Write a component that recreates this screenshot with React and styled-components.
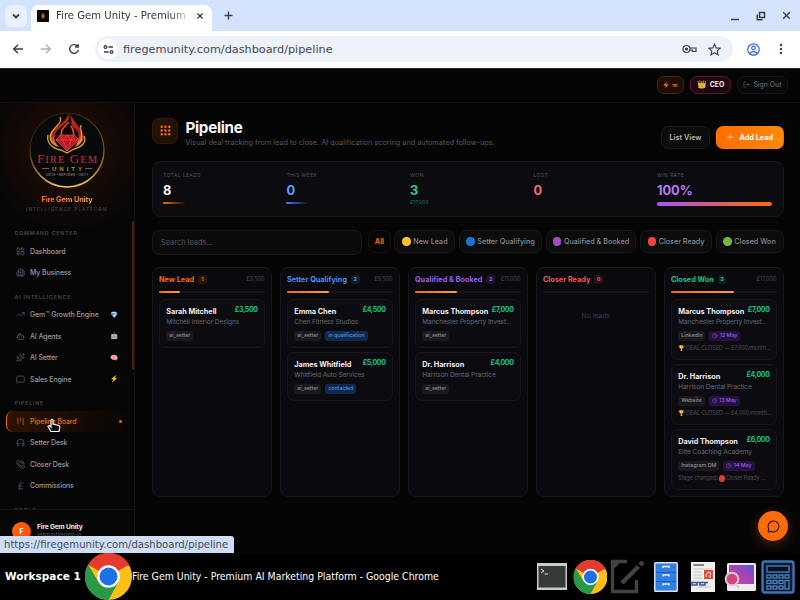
import React from "react";
import styled, { createGlobalStyle, css } from "styled-components";
import {
  LayoutDashboard,
  Building2,
  TrendingUp,
  Bot,
  Sparkles,
  MessageSquare,
  Kanban,
  Headphones,
  PhoneCall,
  PoundSterling,
  LogOut,
  Zap,
  Grip,
  Plus,
  Clock,
  MessageCircle
} from "lucide-react";

const GlobalStyle = createGlobalStyle`
  * { box-sizing: border-box; }
  body {
    margin: 0;
    background: #000;
    overflow: hidden;
  }
`;

const Screen = styled.div`
  width: 800px;
  height: 600px;
  position: relative;
  display: flex;
  flex-direction: column;
  overflow: hidden;
  white-space: nowrap;
  font-family: Inter, "Liberation Sans", sans-serif;
`;

/* ---------- browser ---------- */

const TabStrip = styled.div`
  height: 31px;
  flex: none;
  background: #d3e3fd;
  display: flex;
  align-items: flex-end;
  font-family: "DejaVu Sans", sans-serif;
`;

const TabSearch = styled.div`
  width: 22px;
  height: 22px;
  margin: 0 4px 4px 5px;
  border-radius: 7px;
  background: #e9f1fe;
  display: flex;
  align-items: center;
  justify-content: center;
`;

const Tab = styled.div`
  width: 181px;
  height: 26px;
  padding: 0 8px 5px 6px;
  border-radius: 8px 8px 0 0;
  background: #fff;
  display: flex;
  align-items: center;
`;

const Favicon = styled.div`
  width: 12px;
  height: 12px;
  flex: none;
  margin-right: 7px;
  background: radial-gradient(ellipse 2.5px 4px, #e9a516, #4b2703 70%, #070707 100%);
`;

const TabTitle = styled.div`
  width: 134px;
  flex: none;
  margin-right: 6px;
  font-size: 10.1px;
  color: #30343a;
  mask-image: linear-gradient(90deg, #000 85%, rgba(0, 0, 0, 0.2) 98%);
`;

const NewTab = styled.div`
  height: 31px;
  margin-left: 12px;
  flex: 1;
  display: flex;
  align-items: center;
`;

const WindowButtons = styled.div`
  height: 31px;
  padding-right: 9px;
  display: flex;
  align-items: center;
  gap: 16px;
`;

const Toolbar = styled.div`
  height: 37px;
  flex: none;
  background: #fff;
  display: flex;
  align-items: center;
  padding: 0 11px 1px 11px;
`;

const NavButtons = styled.div`
  width: 84px;
  display: flex;
  gap: 14px;
`;

const AddressBar = styled.div`
  width: 638px;
  height: 26px;
  border-radius: 13px;
  background: #edf1fa;
  display: flex;
  align-items: center;
  padding: 0 12px 0 3px;
  font-family: "DejaVu Sans", sans-serif;
  color: #43474e;
`;

const SiteInfo = styled.div`
  width: 20px;
  height: 20px;
  margin-right: 5px;
  border-radius: 50%;
  background: #fff;
  display: flex;
  align-items: center;
  justify-content: center;
`;

const Url = styled.div`
  flex: 1;
  font-size: 11.25px;
`;

const BarActions = styled.div`
  display: flex;
  align-items: center;
  gap: 11px;
`;

const ToolActions = styled.div`
  margin-left: 14px;
  display: flex;
  align-items: center;
  gap: 19px;
`;

/* ---------- page ---------- */

const Page = styled.div`
  height: 485px;
  flex: none;
  background: #050505;
  border-top: 1px solid #2a2a2c;
  display: flex;
  flex-direction: column;
  overflow: hidden;
`;

const TopBar = styled.div`
  height: 34px;
  flex: none;
  border-bottom: 1px solid #101012;
  background: #050506;
  display: flex;
  align-items: center;
  justify-content: flex-end;
  gap: 6px;
  padding: 0 12px 2px 0;
`;

const TopPill = styled.div`
  width: ${props => props.width};
  height: 18px;
  border: 1px solid ${props => props.line};
  border-radius: 7px;
  background: ${props => props.fill};
  color: ${props => props.tone};
  font-size: 6.9px;
  font-weight: ${props => props.weight || 600};
  display: flex;
  align-items: center;
  justify-content: center;
  gap: 3px;
`;

const Crown = styled.span`
  font-size: 7.8px;
  line-height: 9px;
`;

const Infinity = styled.span`
  font-size: 5.5px;
`;

const Body = styled.div`
  flex: 1;
  min-height: 0;
  display: flex;
`;

const Sidebar = styled.div`
  width: 135px;
  flex: none;
  border-right: 1px solid #121214;
  display: flex;
  flex-direction: column;
  background: radial-gradient(circle 85px at 68px 46px, #2a1205 0, #160a05 50%, #060607 100%);
`;

const Brand = styled.div`
  height: 112px;
  flex: none;
  padding-top: 8px;
  display: flex;
  flex-direction: column;
  align-items: center;
`;

const BrandName = styled.div`
  margin-top: 5px;
  line-height: 11px;
  font-size: 7.3px;
  font-weight: 700;
  letter-spacing: -0.1px;
  color: transparent;
  background: linear-gradient(90deg, #ff6c00, #ffb13b);
  background-clip: text;
`;

const BrandTag = styled.div`
  line-height: 9px;
  font-size: 4.7px;
  letter-spacing: 1.05px;
  color: #4c4c52;
`;

const ScrollArea = styled.div`
  height: 294px;
  flex: none;
  overflow: hidden;
  display: flex;
`;

const Nav = styled.div`
  flex: 1;
  padding: 13px 0 0 6px;
`;

const ScrollThumb = styled.div`
  width: 2px;
  height: 149px;
  margin-top: 6px;
  border-radius: 2px;
  background: #4c1f07;
`;

const NavLabel = styled.div`
  height: 10px;
  margin-top: ${props => (props.first ? "0" : "8.2px")};
  margin-bottom: 2.4px;
  padding-left: 8.5px;
  line-height: 10px;
  font-size: 5.25px;
  font-weight: 600;
  letter-spacing: 0.83px;
  color: #46464c;
`;

const NavItem = styled.div`
  width: 122px;
  height: 21.5px;
  padding: 0 5px 0 8.5px;
  display: flex;
  align-items: center;
  gap: 5.5px;
  border-left: 1px solid transparent;
  border-radius: 7px;
  color: #98989e;
  font-size: 7px;
  font-weight: 500;
  letter-spacing: -0.12px;
  svg { color: #5a5a60; }
  ${props =>
    props.active &&
    css`
      color: #f96a09;
      border-left-color: #ff6a00;
      background: linear-gradient(90deg, #2c1303, #120804 70%, #080605);
      svg { color: #d8590a; }
    `}
`;

const NavText = styled.div`
  flex: 1;
`;

const NavEmoji = styled.div`
  width: 10px;
  margin-right: 4px;
  font-size: 6.6px;
  line-height: 8px;
  text-align: center;
`;

const ActiveDot = styled.div`
  width: 3px;
  height: 3px;
  margin-right: 1px;
  border-radius: 50%;
  background: #ff6a00;
`;

const UserBox = styled.div`
  flex: 1;
  border-top: 1px solid #161618;
  padding: 12px 0 0 12px;
  display: flex;
  align-items: flex-start;
  gap: 6px;
`;

const Avatar = styled.div`
  width: 19px;
  height: 19px;
  border-radius: 50%;
  background: linear-gradient(135deg, #ff6a00, #ff4512);
  color: #fff;
  font-size: 7px;
  font-weight: 700;
  display: flex;
  align-items: center;
  justify-content: center;
`;

const UserName = styled.div`
  line-height: 10px;
  font-size: 6.7px;
  font-weight: 700;
  letter-spacing: -0.18px;
  color: #e9e9ec;
`;

const UserMail = styled.div`
  line-height: 7px;
  font-size: 5.5px;
  color: #505056;
`;

const Main = styled.div`
  flex: 1;
  min-width: 0;
  padding: 14px 16.5px 0 17px;
`;

const Header = styled.div`
  height: 44px;
  display: flex;
  align-items: flex-start;
`;

const HeaderIcon = styled.div`
  width: 26px;
  height: 26px;
  margin: 0.5px 7.5px 0 0;
  border-radius: 7px;
  border: 1px solid #301a0a;
  background: linear-gradient(135deg, #281305, #1b1005);
  color: #ff6a00;
  display: flex;
  align-items: center;
  justify-content: center;
`;

const Heading = styled.div`
  flex: 1;
  padding-top: 1px;
`;

const Title = styled.div`
  line-height: 20px;
  font-size: 15.2px;
  font-weight: 700;
  letter-spacing: -0.3px;
  color: #fafafa;
`;

const Subtitle = styled.div`
  line-height: 10px;
  font-size: 7.3px;
  color: #56565d;
`;

const Button = styled.div`
  width: ${props => (props.primary ? "67.5px" : "49px")};
  height: 22.5px;
  margin: 9px 0 0 6px;
  border-radius: 7px;
  display: flex;
  align-items: center;
  justify-content: center;
  gap: 5px;
  font-size: 7.3px;
  font-weight: ${props => (props.primary ? 700 : 600)};
  color: ${props => (props.primary ? "#fff" : "#b4b4b8")};
  background: ${props =>
    props.primary ? "linear-gradient(90deg, #ff6b00, #ff8a0a)" : "#0c0c0d"};
  border: 1px solid ${props => (props.primary ? "transparent" : "#19191b")};
`;

const StatsPanel = styled.div`
  height: 56px;
  padding: 9px 10.5px 0 10px;
  border: 1px solid #18181c;
  border-radius: 9px;
  background: #0b0b10;
  display: grid;
  grid-template-columns: repeat(5, 1fr);
  column-gap: 8.4px;
`;

const Stat = styled.div`
  display: flex;
  flex-direction: column;
`;

const StatLabel = styled.div`
  line-height: 9px;
  font-size: 5.2px;
  letter-spacing: 0.3px;
  color: #505057;
`;

const StatValue = styled.div`
  margin-top: 3px;
  line-height: 15px;
  font-size: 12.8px;
  font-weight: 700;
  color: ${props => props.tone};
`;

const StatLine = styled.div`
  width: ${props => props.width};
  height: ${props => props.height};
  margin-top: 3.5px;
  border-radius: 2px;
  background: linear-gradient(90deg, ${props => props.from}, ${props => props.to});
`;

const StatNote = styled.div`
  line-height: 8px;
  margin-top: 0;
  font-size: 5.1px;
  color: #0e7f5a;
`;

const Filters = styled.div`
  height: 50px;
  padding-top: 13px;
  display: flex;
  align-items: flex-start;
  gap: 3.6px;
`;

const Search = styled.div`
  width: 210.5px;
  height: 25px;
  margin: -0.5px 2px 0 0;
  padding-left: 8px;
  border: 1px solid #17171a;
  border-radius: 7px;
  background: #0b0b0e;
  line-height: 23px;
  font-size: 7.4px;
  color: #56565d;
`;

const Chip = styled.div`
  width: ${props => props.width};
  height: 22.5px;
  border-radius: 7px;
  border: 1px solid ${props => (props.active ? "#1c0e06" : "#161617")};
  background: ${props => (props.active ? "#080605" : "#0c0c0d")};
  color: ${props => (props.active ? "#f56504" : "#8a8a8f")};
  font-size: 7.2px;
  font-weight: ${props => (props.active ? 700 : 500)};
  display: flex;
  align-items: center;
  justify-content: center;
  gap: 2.5px;
`;

const Dot = styled.span`
  display: inline-block;
  flex: none;
  width: ${props => props.size || "8.5px"};
  height: ${props => props.size || "8.5px"};
  border-radius: 50%;
  background: ${props => props.tone};
`;

const Board = styled.div`
  display: grid;
  grid-template-columns: repeat(5, 1fr);
  column-gap: 8.4px;
`;

const Column = styled.div`
  min-width: 0;
  height: 230px;
  padding: 5.5px 6px 0 6px;
  border: 1px solid #17171b;
  border-radius: 8px;
  background: #0a0a0e;
`;

const ColumnHead = styled.div`
  height: 12px;
  display: flex;
  align-items: center;
`;

const ColumnTitle = styled.div`
  font-size: 7.3px;
  font-weight: 700;
  color: ${props => props.tone};
`;

const Count = styled.div`
  width: 8.5px;
  height: 9px;
  margin: -1px 0 0 4px;
  border-radius: 3px;
  background: ${props => props.tone}22;
  color: ${props => props.tone};
  font-size: 5.4px;
  font-weight: 700;
  line-height: 9px;
  text-align: center;
`;

const Total = styled.div`
  margin: -2px 0 0 auto;
  font-size: 5.5px;
  line-height: 10px;
  color: #4a4a51;
`;

const Track = styled.div`
  height: 2.6px;
  margin: 5px 0 6px;
  border-radius: 2px;
  background: #15151a;
`;

const TrackFill = styled.div`
  width: ${props => props.amount}%;
  height: 100%;
  border-radius: 2px;
  background: linear-gradient(90deg, #ff6a00, #ffa028);
`;

const Card = styled.div`
  height: ${props => (props.tall ? "60.6px" : "48.7px")};
  margin-bottom: 4.4px;
  padding: 5px 6px 0 6.3px;
  border: 1px solid #17171c;
  border-radius: 7px;
  background: #0c0c10;
`;

const CardTop = styled.div`
  display: flex;
  justify-content: space-between;
`;

const CardName = styled.div`
  line-height: 13px;
  font-size: 7.3px;
  font-weight: 700;
  letter-spacing: -0.05px;
  color: #ededf0;
`;

const Amount = styled.div`
  line-height: 10px;
  font-size: 7px;
  font-weight: 700;
  letter-spacing: -0.38px;
  color: #15c58a;
`;

const Company = styled.div`
  line-height: 9px;
  font-size: 6.6px;
  letter-spacing: -0.1px;
  color: #666871;
`;

const Tags = styled.div`
  margin-top: 4px;
  display: flex;
  gap: 4px;
`;

const tagTones = {
  grey: ["#1a1a1e", "#8b8b91"],
  blue: ["#10294d", "#4c8fe4"],
  purple: ["#261240", "#9c5fe0"]
};

const Tag = styled.div`
  height: 9.5px;
  padding: 0 3px;
  border-radius: 3px;
  background: ${props => tagTones[props.kind][0]};
  color: ${props => tagTones[props.kind][1]};
  font-size: 5.4px;
  font-weight: 500;
  letter-spacing: -0.08px;
  line-height: 9px;
  display: flex;
  align-items: center;
  gap: 2px;
`;

const Note = styled.div`
  margin-top: 3.5px;
  line-height: 9px;
  font-size: 5.5px;
  letter-spacing: -0.1px;
  color: #4a4a51;
  display: flex;
  align-items: center;
  gap: 1px;
`;

const Empty = styled.div`
  margin-top: 18px;
  text-align: center;
  font-size: 6.8px;
  line-height: 10px;
  color: #3c3c42;
`;

/* ---------- overlays and taskbar ---------- */

const ChatButton = styled.div`
  position: absolute;
  left: 758px;
  top: 511px;
  width: 30px;
  height: 30px;
  border-radius: 50%;
  background: #ff6b08;
  box-shadow: 0 3px 12px rgba(255, 107, 0, 0.3);
  color: #251103;
  display: flex;
  align-items: center;
  justify-content: center;
`;

const StatusBubble = styled.div`
  position: absolute;
  left: 0;
  top: 536px;
  width: 234px;
  height: 17px;
  padding-left: 4px;
  border-radius: 0 3px 0 0;
  background: #cfdef8;
  color: #454a53;
  font: 10.1px/17px "DejaVu Sans", sans-serif;
`;

const Pointer = styled.svg`
  position: absolute;
  left: 47px;
  top: 418px;
`;

const Taskbar = styled.div`
  height: 47px;
  flex: none;
  position: relative;
  background: #000;
  color: #fff;
  display: flex;
  align-items: center;
  padding: 0 5px;
`;

const Workspace = styled.div`
  width: 80px;
  margin-top: -1px;
  font: bold 10.5px "DejaVu Sans", sans-serif;
`;

const TaskTitle = styled.div`
  flex: 1;
  margin-top: -1px;
  font: 10.43px "DejaVu Sans Condensed", "DejaVu Sans", sans-serif;
`;

const Dock = styled.div`
  display: flex;
  align-items: center;
  gap: 2.5px;
`;

const stroke = { fill: "none", stroke: "#3b3e44", strokeWidth: 1.4 };

const ChromeLogo = ({ size }) => (
  <svg width={size} height={size} viewBox="0 0 48 48">
    <circle cx="24" cy="24" r="24" fill="#fbc116" />
    <path d="M24 24 L3.2 12 A24 24 0 0 1 44.8 12 Z" fill="#e33b2e" />
    <path d="M24 13 H45.3 L44.8 12 A24 24 0 0 0 24 0 Z" fill="#e33b2e" />
    <path d="M3.2 12 A24 24 0 0 0 24 48 L34 29.8 L14 29.8 Z" fill="#299847" />
    <circle cx="24" cy="24" r="11.5" fill="#fff" />
    <circle cx="24" cy="24" r="9.2" fill="#1b72e8" />
  </svg>
);

const BrandLogo = () => (
  <svg width="78" height="78" viewBox="0 0 78 78">
    <defs>
      <linearGradient id="ring" x1="0" y1="0" x2="1" y2="1">
        <stop offset="0" stopColor="#20160c" />
        <stop offset="0.5" stopColor="#4e3512" />
        <stop offset="1" stopColor="#a87520" />
      </linearGradient>
      <linearGradient id="ringLow" x1="0" y1="0" x2="0" y2="1">
        <stop offset="0.45" stopColor="#a57018" stopOpacity="0" />
        <stop offset="1" stopColor="#f2c35a" />
      </linearGradient>
      <linearGradient id="flame" x1="0" y1="0" x2="0" y2="1">
        <stop offset="0" stopColor="#d9311e" />
        <stop offset="0.6" stopColor="#a5161a" />
        <stop offset="1" stopColor="#e9a83a" />
      </linearGradient>
    </defs>
    <circle cx="39" cy="39" r="37" fill="#08090b" stroke="url(#ring)" strokeWidth="1.2" />
    <circle cx="39" cy="39" r="37" fill="none" stroke="url(#ringLow)" strokeWidth="1.6" />
    <path d="M40 3 C43 10 37 12 31 18 C25 23 25 31 31 36 C22 34 20 27 24 20 C28 14 39 12 40 3Z" fill="url(#flame)" />
    <path d="M41 2 C45 9 42 12 45 16 C51 20 53 27 47 36 C57 32 58 24 52 17 C48 13 46 9 41 2Z" fill="url(#flame)" />
    <path d="M32 6 C34 10 31 13 27 17 C23 21 20 26 24 32 M53 14 C51 19 57 24 51 33 M20 24 C18 32 25 38 33 39 L39 42 L46 38 C54 36 59 31 56 25" fill="none" stroke="#dca33c" strokeWidth="1.3" />
    <path d="M41 11 C34 18 32 20 34 25 M43 15 C46 19 45 21 46 24" fill="none" stroke="#eb4a24" strokeWidth="1.6" />
    <path d="M32 24 H46 L51 29 L39 40 L28 29Z" fill="#bd1821" stroke="#ef5a50" strokeWidth="0.6" />
    <path d="M28 29 H51 M32 24 L35 29 L39 40 L43 29 L46 24 M35 29 L39 24 L43 29" fill="none" stroke="#f0605c" strokeWidth="0.5" />
    <text x="39" y="51.5" textAnchor="middle" textLength="60" fontFamily="Liberation Serif, serif" fontSize="13" fill="#d02a2c">
      F<tspan fontSize="10.5">IRE</tspan> G<tspan fontSize="10.5">EM</tspan>
    </text>
    <text x="39" y="59.5" textAnchor="middle" textLength="30" fontFamily="Liberation Sans, sans-serif" fontSize="6" fontWeight="700" fill="#b98632">
      UNITY
    </text>
    <path d="M14 57.5 H21 M57 57.5 H64" stroke="#a87427" strokeWidth="0.8" />
    <text x="39" y="64.5" textAnchor="middle" textLength="42" fontFamily="Liberation Sans, sans-serif" fontSize="2.7" fill="#a4a4a8">
      UNITE • EMPOWER • UNITY
    </text>
  </svg>
);

const navGroups = [
  {
    label: "COMMAND CENTER",
    items: [
      { text: "Dashboard", Icon: LayoutDashboard },
      { text: "My Business", Icon: Building2 }
    ]
  },
  {
    label: "AI INTELLIGENCE",
    items: [
      { text: "Gem™ Growth Engine", Icon: TrendingUp, emoji: "💎" },
      { text: "AI Agents", Icon: Bot, emoji: "🤖" },
      { text: "AI Setter", Icon: Sparkles, emoji: "🧠" },
      { text: "Sales Engine", Icon: MessageSquare, emoji: "⚡" }
    ]
  },
  {
    label: "PIPELINE",
    items: [
      { text: "Pipeline Board", Icon: Kanban, active: true },
      { text: "Setter Desk", Icon: Headphones },
      { text: "Closer Desk", Icon: PhoneCall },
      { text: "Commissions", Icon: PoundSterling }
    ]
  },
  { label: "TOOLS", items: [] }
];

const chips = [
  { text: "New Lead", tone: "#fcc52c", width: "61px" },
  { text: "Setter Qualifying", tone: "#1878d1", width: "83px" },
  { text: "Qualified & Booked", tone: "#a94ac4", width: "91px" },
  { text: "Closer Ready", tone: "#f1443a", width: "72px" },
  { text: "Closed Won", tone: "#7bb342", width: "68px" }
];

const columns = [
  {
    title: "New Lead",
    tone: "#f66a0a",
    total: "£3,500",
    progress: 20,
    cards: [
      { name: "Sarah Mitchell", amount: "£3,500", company: "Mitchell Interior Designs", tag: "ai_setter" }
    ]
  },
  {
    title: "Setter Qualifying",
    tone: "#4a93ee",
    total: "£9,500",
    progress: 40,
    cards: [
      { name: "Emma Chen", amount: "£4,500", company: "Chen Fitness Studios", tag: "ai_setter", status: "in qualification" },
      { name: "James Whitfield", amount: "£5,000", company: "Whitfield Auto Services", tag: "ai_setter", status: "contacted" }
    ]
  },
  {
    title: "Qualified & Booked",
    tone: "#9d5cf0",
    total: "£11,000",
    progress: 40,
    cards: [
      { name: "Marcus Thompson", amount: "£7,000", company: "Manchester Property Invest...", tag: "ai_setter" },
      { name: "Dr. Harrison", amount: "£4,000", company: "Harrison Dental Practice", tag: "ai_setter" }
    ]
  },
  { title: "Closer Ready", tone: "#ef5858", progress: 0, cards: [] },
  {
    title: "Closed Won",
    tone: "#12c787",
    total: "£17,000",
    progress: 60,
    cards: [
      { name: "Marcus Thompson", amount: "£7,000", company: "Manchester Property Invest...", tag: "LinkedIn", date: "12 May", note: "DEAL CLOSED — £7,800/month..." },
      { name: "Dr. Harrison", amount: "£4,000", company: "Harrison Dental Practice", tag: "Website", date: "13 May", note: "DEAL CLOSED — £4,000/month..." },
      { name: "David Thompson", amount: "£6,000", company: "Elite Coaching Academy", tag: "Instagram DM", date: "14 May", stage: true }
    ]
  }
];

const BrowserChrome = () => (
  <>
    <TabStrip>
      <TabSearch>
        <svg width="10" height="10" viewBox="0 0 10 10" {...stroke} strokeWidth="1.8"><path d="M2 3.5 L5 6.5 L8 3.5" /></svg>
      </TabSearch>
      <Tab>
        <Favicon />
        <TabTitle>Fire Gem Unity - Premium</TabTitle>
        <svg width="8" height="8" viewBox="0 0 8 8" {...stroke}><path d="M1.5 1.5 L6.5 6.5 M6.5 1.5 L1.5 6.5" /></svg>
      </Tab>
      <NewTab>
        <svg width="9" height="9" viewBox="0 0 9 9" {...stroke}><path d="M4.5 0.5 V8.5 M0.5 4.5 H8.5" /></svg>
      </NewTab>
      <WindowButtons>
        <svg width="10" height="10" viewBox="0 0 10 10" {...stroke}><path d="M1 8.5 H9" /></svg>
        <svg width="10" height="10" viewBox="0 0 10 10" {...stroke} strokeWidth="1.5"><path d="M3.5 1.5 H8.5 V6.5 H3.5Z M1.2 3.5 V8.8 H6.5" /></svg>
        <svg width="9" height="9" viewBox="0 0 9 9" {...stroke}><path d="M1.2 1.2 L7.8 7.8 M7.8 1.2 L1.2 7.8" /></svg>
      </WindowButtons>
    </TabStrip>
    <Toolbar>
      <NavButtons>
        <svg width="14" height="14" viewBox="0 0 14 14" {...stroke}><path d="M12 7 H3 M7 2.7 L2.7 7 L7 11.3" /></svg>
        <svg width="14" height="14" viewBox="0 0 14 14" {...stroke} stroke="#aeb0b4"><path d="M2 7 H11 M7 2.7 L11.3 7 L7 11.3" /></svg>
        <svg width="14" height="14" viewBox="0 0 14 14" {...stroke}><path d="M10.7 4.5 A4.4 4.4 0 1 0 11.4 7.8 M11.2 2 V5 H8" /></svg>
      </NavButtons>
      <AddressBar>
        <SiteInfo>
          <svg width="11" height="11" viewBox="0 0 11 11" {...stroke} strokeWidth="1.3">
            <circle cx="2.5" cy="3" r="1.4" />
            <circle cx="8.5" cy="8" r="1.4" />
            <path d="M5.5 3 H10 M1 8 H5.5" />
          </svg>
        </SiteInfo>
        <Url>firegemunity.com/dashboard/pipeline</Url>
        <BarActions>
          <svg width="15" height="10" viewBox="0 0 15 10" {...stroke} strokeWidth="1.2">
            <circle cx="4.5" cy="5" r="3.5" />
            <circle cx="4.5" cy="5" r="1" fill="#3b3e44" />
            <path d="M8 4 H14 V7.5 H10.5 V6 H8" />
          </svg>
          <svg width="13" height="13" viewBox="0 0 24 24" {...stroke} strokeWidth="2">
            <path d="M12 2 L15 9 L22.5 9.5 L17 14.5 L18.7 22 L12 18 L5.3 22 L7 14.5 L1.5 9.5 L9 9Z" />
          </svg>
        </BarActions>
      </AddressBar>
      <ToolActions>
        <svg width="13" height="13" viewBox="0 0 13 13" fill="none" stroke="#3763d5" strokeWidth="1.2">
          <circle cx="6.5" cy="6.5" r="5.7" />
          <circle cx="6.5" cy="5" r="1.8" />
          <path d="M2.7 10.4 C4.5 8 8.5 8 10.3 10.4" />
        </svg>
        <svg width="4" height="12" viewBox="0 0 4 12" fill="#3b3e44">
          <circle cx="2" cy="2" r="1.2" />
          <circle cx="2" cy="6" r="1.2" />
          <circle cx="2" cy="10" r="1.2" />
        </svg>
      </ToolActions>
    </Toolbar>
  </>
);

const SideNav = () => (
  <Sidebar>
    <Brand>
      <BrandLogo />
      <BrandName>Fire Gem Unity</BrandName>
      <BrandTag>INTELLIGENCE PLATFORM</BrandTag>
    </Brand>
    <ScrollArea>
      <Nav>
        {navGroups.map((group, i) => (
          <React.Fragment key={group.label}>
            <NavLabel first={i === 0}>{group.label}</NavLabel>
            {group.items.map(({ text, Icon, emoji, active }) => (
              <NavItem key={text} active={active}>
                <Icon size={9} strokeWidth={2} />
                <NavText>{text}</NavText>
                {emoji && <NavEmoji>{emoji}</NavEmoji>}
                {active && <ActiveDot />}
              </NavItem>
            ))}
          </React.Fragment>
        ))}
      </Nav>
      <ScrollThumb />
    </ScrollArea>
    <UserBox>
      <Avatar>F</Avatar>
      <div>
        <UserName>Fire Gem Unity</UserName>
        <UserMail>team@firegem.io</UserMail>
      </div>
    </UserBox>
  </Sidebar>
);

const LeadCard = ({ lead }) => (
  <Card tall={Boolean(lead.date)}>
    <CardTop>
      <CardName>{lead.name}</CardName>
      <Amount>{lead.amount}</Amount>
    </CardTop>
    <Company>{lead.company}</Company>
    <Tags>
      <Tag kind="grey">{lead.tag}</Tag>
      {lead.status && <Tag kind="blue">{lead.status}</Tag>}
      {lead.date && (
        <Tag kind="purple">
          <Clock size={5.5} />
          {lead.date}
        </Tag>
      )}
    </Tags>
    {lead.note && <Note><span>🏆</span>{lead.note}</Note>}
    {lead.stage && <Note>Stage changed: <Dot size="6.5px" tone="#df3a31" /> Closer Ready ...</Note>}
  </Card>
);

const PipelineBoard = () => (
  <Main>
    <Header>
      <HeaderIcon><Grip size={13} strokeWidth={2.6} /></HeaderIcon>
      <Heading>
        <Title>Pipeline</Title>
        <Subtitle>Visual deal tracking from lead to close. AI qualification scoring and automated follow-ups.</Subtitle>
      </Heading>
      <Button>List View</Button>
      <Button primary><Plus size={8} />Add Lead</Button>
    </Header>
    <StatsPanel>
      <Stat>
        <StatLabel>TOTAL LEADS</StatLabel>
        <StatValue tone="#fafafa">8</StatValue>
        <StatLine width="23px" height="2px" from="#ff6a00" to="#0b0b10" />
      </Stat>
      <Stat>
        <StatLabel>THIS WEEK</StatLabel>
        <StatValue tone="#5aa0f5">0</StatValue>
        <StatLine width="23px" height="2px" from="#3b82f6" to="#0b0b10" />
      </Stat>
      <Stat>
        <StatLabel>WON</StatLabel>
        <StatValue tone="#2ccb91">3</StatValue>
        <StatNote>£17,000</StatNote>
      </Stat>
      <Stat>
        <StatLabel>LOST</StatLabel>
        <StatValue tone="#f06b6b">0</StatValue>
      </Stat>
      <Stat>
        <StatLabel>WIN RATE</StatLabel>
        <StatValue tone="#b57bf5">100%</StatValue>
        <StatLine width="100%" height="4px" from="#a855f7" to="#ff6a00" />
      </Stat>
    </StatsPanel>
    <Filters>
      <Search>Search leads...</Search>
      <Chip active width="23px">All</Chip>
      {chips.map(chip => (
        <Chip key={chip.text} width={chip.width}>
          <Dot tone={chip.tone} />
          {chip.text}
        </Chip>
      ))}
    </Filters>
    <Board>
      {columns.map(column => (
        <Column key={column.title}>
          <ColumnHead>
            <ColumnTitle tone={column.tone}>{column.title}</ColumnTitle>
            <Count tone={column.tone}>{column.cards.length}</Count>
            <Total>{column.total}</Total>
          </ColumnHead>
          <Track><TrackFill amount={column.progress} /></Track>
          {column.cards.map(lead => <LeadCard key={lead.name} lead={lead} />)}
          {column.cards.length === 0 && <Empty>No leads</Empty>}
        </Column>
      ))}
    </Board>
  </Main>
);

const DockIcons = () => (
  <Dock>
    <svg width="32" height="32" viewBox="0 0 32 32">
      <rect x="1" y="2" width="30" height="27" fill="#c8cac6" />
      <rect x="2.5" y="5" width="27" height="21.5" fill="#343a38" />
      <path d="M5 8 L8 10 L5 12 M8.5 13 H12" fill="none" stroke="#e0e0e0" />
    </svg>
    <svg width="36" height="34" viewBox="-2.5 0 36 34">
      <ChromeLogo size={34} />
    </svg>
    <svg width="36" height="36" viewBox="0 0 36 36" fill="none" stroke="#424242" strokeWidth="3.4">
      <path d="M18 2.5 H3.5 V32.5 H27.5 V21 M3.5 9 L9 3.5" />
      <path d="M13 24 L29.5 7.5 M31 6 L34 3" strokeWidth="4.4" />
    </svg>
    <svg width="36" height="34" viewBox="0 0 36 34">
      <rect x="6" y="2" width="24" height="30" rx="1.5" fill="#d8e2ec" />
      <rect x="7.5" y="3.5" width="21" height="27" fill="#2f7fe4" />
      <path d="M8 12.5 H28 M8 21.5 H28" stroke="#1d5bb4" />
      <path d="M15 8 V6.5 H21 V8 M15 16.5 V15 H21 V16.5 M15 25.5 V24 H21 V25.5" stroke="#e8eef5" strokeWidth="1.5" fill="none" />
    </svg>
    <svg width="34" height="34" viewBox="0 0 34 34">
      <rect x="5" y="2" width="24" height="30" fill="#efefec" />
      <path d="M7.5 5 H18" stroke="#555" strokeWidth="1.4" />
      <path d="M7.5 9 H26 M7.5 12 H16 M7.5 15 H16 M7.5 18 H16 M12 27 H25" stroke="#c4c4c0" />
      <rect x="18" y="10" width="9" height="9" fill="#e6473b" />
      <path d="M20 17 C19 13 25 10 24.5 14 C24 17 21 16 25 17" fill="none" stroke="#fff" />
      <path d="M4 22.5 H22 M6 23 V25 H11 V23 M14 23 V25 H19 V23" fill="none" stroke="#38569e" strokeWidth="1.5" />
    </svg>
    <svg width="36" height="34" viewBox="0 0 36 34">
      <defs>
        <linearGradient id="photo" x1="0" y1="1" x2="1" y2="0">
          <stop offset="0" stopColor="#e04687" />
          <stop offset="0.55" stopColor="#a044bd" />
          <stop offset="1" stopColor="#4f59d5" />
        </linearGradient>
      </defs>
      <rect x="4" y="3" width="29" height="28" rx="1.5" fill="#ededed" />
      <rect x="6" y="5" width="25" height="19" fill="url(#photo)" />
      <circle cx="9" cy="19" r="6.3" fill="#d9437f" stroke="#d8c9cf" strokeWidth="2" />
      <path d="M13 25 L16 28" stroke="#cfcfcf" strokeWidth="2" />
    </svg>
    <svg width="34" height="34" viewBox="0 0 34 34">
      <rect x="1.5" y="1.5" width="31" height="31" rx="2" fill="#0d1a29" stroke="#3c74b8" strokeWidth="2.4" />
      <rect x="6" y="6" width="22" height="6" fill="#08121d" stroke="#3c74b8" strokeWidth="1.5" />
      <g fill="none" stroke="#4a83c6" strokeWidth="1.3">
        {[15, 20.5, 26].map(y =>
          [6, 12, 18].map(x => <rect key={`${x}-${y}`} x={x} y={y} width="4" height="3" />)
        )}
        <rect x="24" y="15" width="4" height="3" />
        <rect x="24" y="20.5" width="4" height="8.5" />
      </g>
    </svg>
  </Dock>
);

const App = () => (
  <Screen>
    <GlobalStyle />
    <BrowserChrome />
    <Page>
      <TopBar>
        <TopPill width="27px" line="#4e2607" fill="#1f0f03" tone="#f36b07"><Zap size={6} fill="#f36b07" /><Infinity>∞</Infinity></TopPill>
        <TopPill width="41px" line="#57182a" fill="#200810" tone="#f3eef0" weight={700}><Crown>👑</Crown>CEO</TopPill>
        <TopPill width="51px" line="#151517" fill="#09090a" tone="#626267" weight={500}><LogOut size={7} />Sign Out</TopPill>
      </TopBar>
      <Body>
        <SideNav />
        <PipelineBoard />
      </Body>
    </Page>
    <Taskbar>
      <Workspace>Workspace 1</Workspace>
      <ChromeLogo size={47} />
      <TaskTitle>Fire Gem Unity - Premium AI Marketing Platform - Google Chrome</TaskTitle>
      <DockIcons />
    </Taskbar>
    <ChatButton><MessageCircle size={13} strokeWidth={2} /></ChatButton>
    <StatusBubble>https://firegemunity.com/dashboard/pipeline</StatusBubble>
    <Pointer width="14" height="15" viewBox="0 0 14 15">
      <path d="M4 13.5 L1 8.5 L2.5 7.5 L4 9 V2 Q5 0.5 6 2 V6 L12 7.5 Q13 8 12.7 10 L12 13.5Z" fill="#111" stroke="#fff" strokeWidth="1.2" />
    </Pointer>
  </Screen>
);

export default App;
